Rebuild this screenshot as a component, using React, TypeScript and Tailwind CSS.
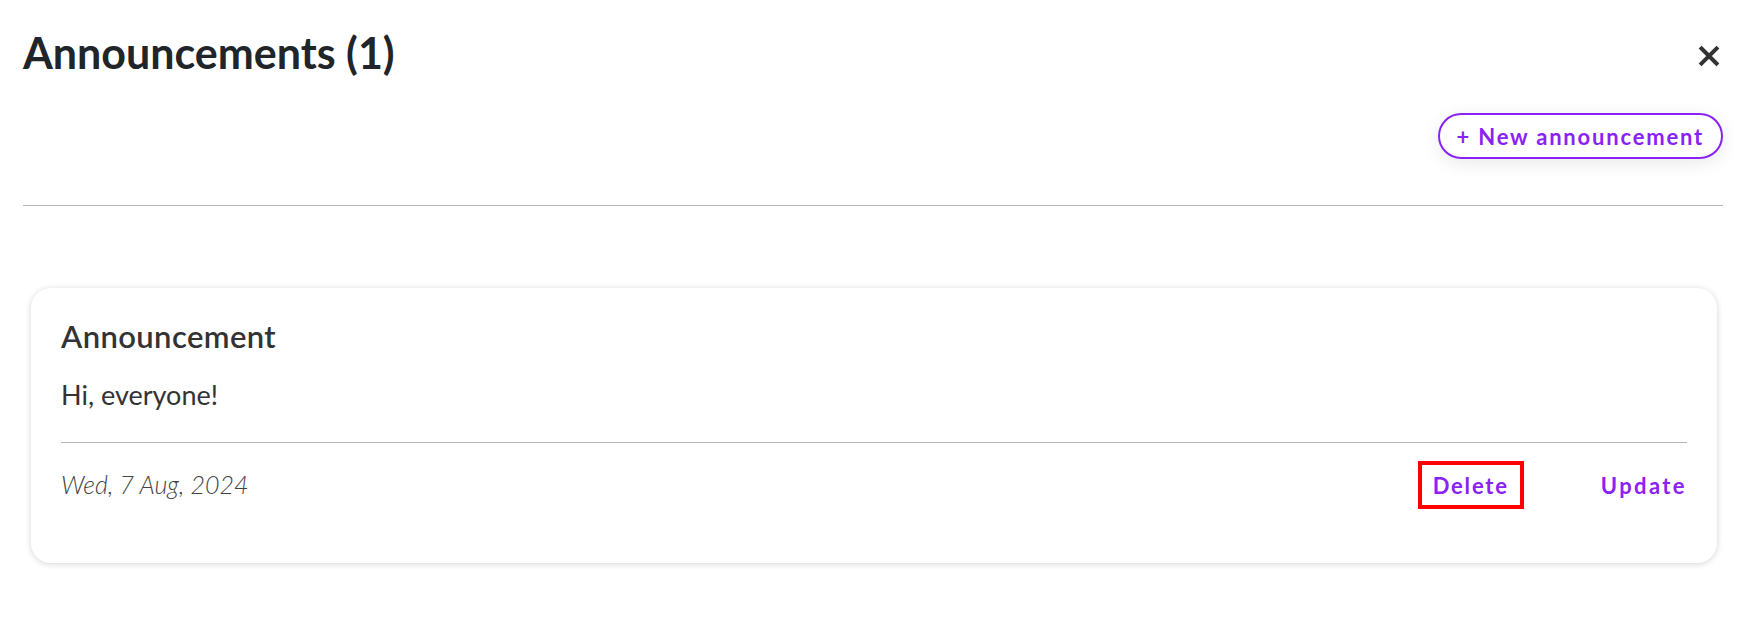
import React from "react";

function CloseIcon() {
  return (
    <svg width="22" height="22" viewBox="0 0 22 22" className="text-[#333]">
      <path d="M3.5 3.5 L18.5 18.5 M18.5 3.5 L3.5 18.5" stroke="currentColor" strokeWidth="4" strokeLinecap="square" />
    </svg>
  );
}

export default function App() {
  return (
    <div className="min-h-[640px] bg-white font-['Lato','Noto_Sans',sans-serif] px-[23px] pt-[27px]">
      <header>
        <div className="flex items-start justify-between">
          <h1 className="text-[43px] leading-[52px] font-bold text-[#212529]">Announcements (1)</h1>
          <button className="mt-[18px] mr-[5px]">
            <CloseIcon />
          </button>
        </div>
        <div className="flex justify-end mt-[34px] mr-[2px]">
          <button className="h-[46px] px-[17px] rounded-full border-2 border-[#8a22f5] text-[#8a22f5] text-[22px] font-bold tracking-[1.8px] shadow-[0_4px_18px_rgba(0,0,0,0.09)] flex items-center">
            + New announcement
          </button>
        </div>
        <div className="mt-[46px] h-px bg-[#b5b5b5] mr-[2px]" />
      </header>

      <section className="mt-[82px] mx-[8px]">
        <div className="rounded-[20px] bg-white shadow-[0_1px_6px_rgba(0,0,0,0.17)] px-[30px] pt-[30px] pb-[54px]">
          <h2 className="text-[31px] leading-[37px] font-semibold tracking-[0.4px] text-[#333]">Announcement</h2>
          <p className="mt-[23px] text-[27px] leading-[33px] text-[#333]">Hi, everyone!</p>
          <div className="mt-[31px] h-px bg-[#b5b5b5]" />
          <div className="flex items-center justify-between pt-[18px]">
            <span className="text-[25px] italic font-light text-[#444]">Wed, 7 Aug, 2024</span>
            <div className="flex items-center gap-[77px]">
              <button className="h-[48px] px-[11px] border-4 border-[#ff0000] text-[22px] font-bold text-[#8a22f5] tracking-[1.8px]">
                Delete
              </button>
              <button className="text-[22px] font-bold text-[#8a22f5] tracking-[2.4px]">Update</button>
            </div>
          </div>
        </div>
      </section>
    </div>
  );
}
